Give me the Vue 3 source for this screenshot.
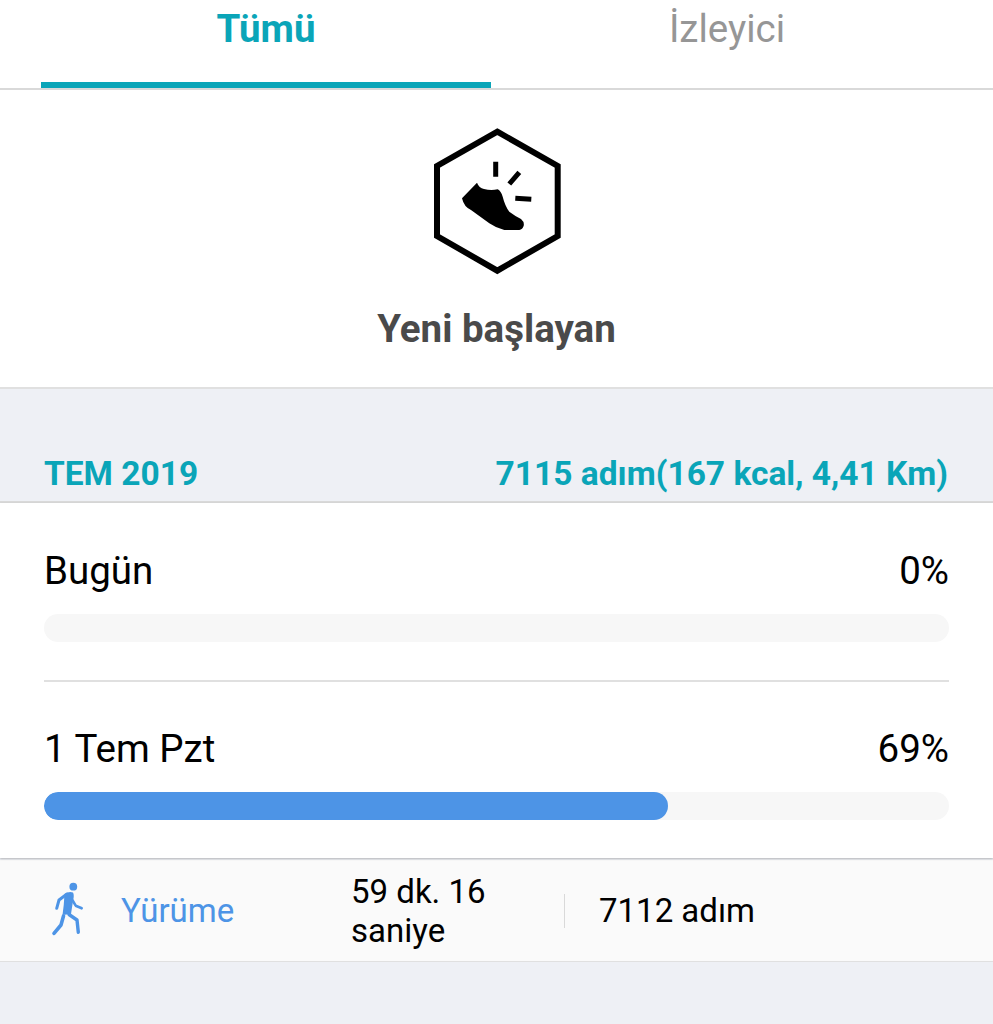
<script setup>
const days = [
  { label: 'Bugün', percent: 0 },
  { label: '1 Tem Pzt', percent: 69 }
]
</script>

<template>
  <div class="page">
    <div class="tabs">
      <div class="tab active">Tümü</div>
      <div class="tab">İzleyici</div>
    </div>

    <div class="hero">
      <svg class="badge" viewBox="431 126 130 150" width="130" height="150">
        <polygon points="496.3,131.7 556.7,166 556.7,236 496.3,270.7 436,236 436,166" fill="none" stroke="#000" stroke-width="6" />
        <path d="M461 198.3 L476 182.7 Q478 188 483 189 Q490 191 496.7 189.3 Q500 191 501.7 196.7 Q504 206 508.3 211.7 Q514 216 520 219 Q523.5 222 522.7 225.7 Q521.5 229.5 518.3 230 L503.3 230 Q495 228 488.3 223.3 L470 210 Q463 207 461 198.3 Z" fill="#000" />
        <path d="M494.7 161.7 L494.7 176.7 M518.3 172.3 L508.3 184 M514.3 198.3 L530.3 199.3" stroke="#000" stroke-width="5" fill="none" />
      </svg>
      <div class="level">Yeni başlayan</div>
    </div>

    <div class="month">
      <span>TEM 2019</span>
      <span>7115 adım(167 kcal, 4,41 Km)</span>
    </div>

    <div class="days">
      <div v-for="day in days" :key="day.label" class="day">
        <div class="day-head">
          <span>{{ day.label }}</span>
          <span>{{ day.percent }}%</span>
        </div>
        <div class="track">
          <div class="fill" :style="{ width: day.percent + '%' }"></div>
        </div>
      </div>
    </div>

    <div class="activity">
      <svg class="walker" viewBox="45 875 45 65" width="45" height="65">
        <circle cx="73.3" cy="886.7" r="3.9" fill="#4d94e6" />
        <path d="M64.5 894 Q69 891 73 892.5 Q74.5 895 73 901 L71 914 L62.5 915 Q64 905 64.5 894 Z" fill="#4d94e6" />
        <path d="M67 894 L59 900 L56.7 908.3" stroke="#4d94e6" stroke-width="3" stroke-linecap="round" stroke-linejoin="round" fill="none" />
        <path d="M72.3 900 L75.7 905.7 L81.7 908.3" stroke="#4d94e6" stroke-width="2.6" stroke-linecap="round" stroke-linejoin="round" fill="none" />
        <path d="M69 914.5 L77 920 L78.3 932.3" stroke="#4d94e6" stroke-width="3.4" stroke-linecap="round" stroke-linejoin="round" fill="none" />
        <path d="M63.5 916 L61 925 L54 933.3" stroke="#4d94e6" stroke-width="3.6" stroke-linecap="round" stroke-linejoin="round" fill="none" />
      </svg>
      <div class="name">Yürüme</div>
      <div class="time">59 dk. 16 saniye</div>
      <div class="sep"></div>
      <div class="steps">7112 adım</div>
    </div>
  </div>
</template>

<style>
html, body { margin: 0; background: #eef0f5; }
</style>

<style scoped>
.page { width: 993px; height: 1024px; overflow: hidden; font-family: Roboto, "Noto Sans", sans-serif; background: #eef0f5; color: #000; }
.tabs { display: flex; height: 88px; padding-left: 41px; background: #fff; border-bottom: 2px solid #d9d9d9; }
.tab { width: 472px; height: 88px; box-sizing: border-box; padding-top: 7px; text-align: center; font-size: 38.5px; line-height: 44px; color: #969696; }
.tab.active { width: 450px; color: #0aa5b8; font-weight: 700; border-bottom: 6px solid #0aa5b8; }
.hero { height: 299px; box-sizing: border-box; padding-top: 36px; background: #fff; border-bottom: 2px solid #e0e0e0; display: flex; flex-direction: column; align-items: center; }
.level { margin-top: 31px; font-size: 38.5px; line-height: 44px; font-weight: 700; color: #4a4a4a; }
.month { height: 114px; box-sizing: border-box; padding: 63px 44px 0; display: flex; justify-content: space-between; font-size: 33.5px; line-height: 44px; font-weight: 700; color: #0aa5b8; border-bottom: 2px solid #d9d9d9; }
.month span:last-child { margin-right: 1px; }
.days { background: #fff; padding: 0 44px; height: 355px; box-sizing: border-box; box-shadow: 0 1px 2px rgba(0,0,0,0.25); position: relative; }
.day { height: 179px; box-sizing: border-box; padding-top: 46px; border-bottom: 2px solid #e0e0e0; }
.day + .day { padding-top: 45px; border-bottom: none; }
.day-head { display: flex; justify-content: space-between; font-size: 38.5px; line-height: 44px; }
.track { margin-top: 21px; height: 28px; border-radius: 14px; background: #f7f7f7; overflow: hidden; }
.fill { height: 100%; border-radius: 14px; background: #4d94e6; }
.activity { height: 102px; margin-top: 2px; box-sizing: border-box; background: #fafafa; border-bottom: 1px solid #e0e0e0; display: flex; align-items: center; padding-left: 45px; font-size: 33px; line-height: 39px; }
.walker { flex: none; margin-bottom: 6px; }
.name { width: 230px; margin-left: 31px; color: #4d94e6; }
.time { width: 213px; padding-right: 20px; box-sizing: border-box; }
.sep { width: 1px; height: 34px; background: #d9d9d9; }
.steps { padding-left: 34px; }
</style>
